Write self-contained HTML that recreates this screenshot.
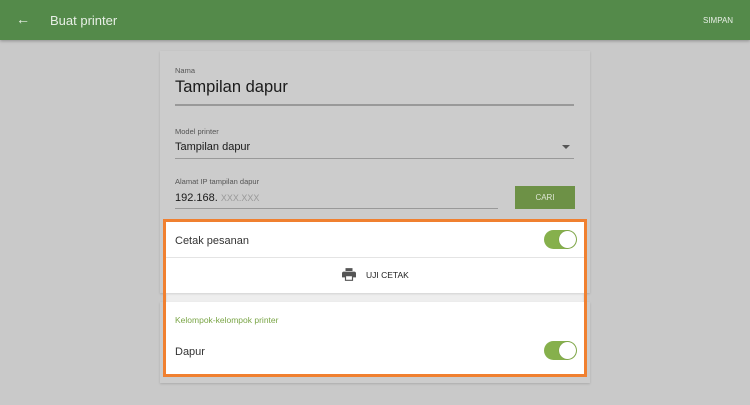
<!DOCTYPE html>
<html><head><style>
*{margin:0;padding:0;box-sizing:border-box}
body{width:750px;height:405px;background:#c9c9c9;font-family:"Liberation Sans",sans-serif;position:relative;overflow:hidden}
.hdr{position:absolute;left:0;top:0;width:750px;height:40px;background:#548a4a;box-shadow:0 1px 3px rgba(0,0,0,.3);color:#e8efe6}
.a{position:absolute}
.card{position:absolute;left:160px;width:430px;background:#cccccc;box-shadow:0 1px 2px rgba(0,0,0,.15)}
.lbl{position:absolute;font-size:7.5px;color:#555}
.line{position:absolute;height:1px;background:#999}
.tog{position:absolute;width:33px;height:19px;border-radius:10px;background:#86b04c}
.tog::after{content:"";position:absolute;right:1px;top:1px;width:17px;height:17px;border-radius:50%;background:#fff;box-shadow:0 0 1px rgba(0,0,0,.3)}
</style></head><body>
<div class="hdr">
<div class="a" style="left:16px;top:11px;font-size:14px">&#8592;</div>
<div class="a" style="left:50px;top:13px;font-size:13px">Buat printer</div>
<div class="a" style="left:703px;top:16px;font-size:8px">SIMPAN</div>
</div>
<div class="card" style="top:51px;height:242px"></div>
<div class="card" style="top:302px;height:81px"></div>
<div class="lbl" style="left:175px;top:66px">Nama</div>
<div class="a" style="left:175px;top:78px;font-size:16.5px;color:#1a1a1a">Tampilan dapur</div>
<div class="line" style="left:175px;top:104px;width:399px;height:1.5px"></div>
<div class="lbl" style="left:175px;top:127px">Model printer</div>
<div class="a" style="left:175px;top:141px;font-size:11px;color:#1a1a1a">Tampilan dapur</div>
<div class="a" style="left:562px;top:145px;width:0;height:0;border-left:4px solid transparent;border-right:4px solid transparent;border-top:4px solid #555"></div>
<div class="line" style="left:175px;top:158px;width:399px"></div>
<div class="lbl" style="left:175px;top:177px">Alamat IP tampilan dapur</div>
<div class="a" style="left:175px;top:192px;font-size:11px;color:#1a1a1a">192.168. <span style="color:#999;font-size:9px">XXX.XXX</span></div>
<div class="line" style="left:175px;top:208px;width:323px"></div>
<div class="a" style="left:515px;top:186px;width:60px;height:23px;background:#6d9146;color:#dde6d4;font-size:8px;text-align:center;line-height:23px">CARI</div>
<div class="a" style="left:163px;top:219px;width:424px;height:158px;border:3px solid #f08030;background:#fff">
<div class="a" style="left:0;top:35px;width:418px;height:1px;background:#e4e4e4"></div>
<div class="a" style="left:9px;top:13px;font-size:11px;color:#333">Cetak pesanan</div>
<div class="tog" style="left:378px;top:8px"></div>
<svg class="a" style="left:176px;top:46px" width="14" height="13" viewBox="0 0 24 22"><path fill="#555" d="M6 0h12v5H6zM3 6h18a3 3 0 0 1 3 3v7h-5v6H5v-6H0V9a3 3 0 0 1 3-3zM7 14v6h10v-6z"/></svg>
<div class="a" style="left:200px;top:48px;font-size:8.5px;color:#222">UJI CETAK</div>
<div class="a" style="left:0;top:71px;width:418px;height:9px;background:#eeeeee;box-shadow:inset 0 1px 2px rgba(0,0,0,.12)"></div>
<div class="a" style="left:9px;top:93px;font-size:8.5px;color:#7aa546">Kelompok-kelompok printer</div>
<div class="a" style="left:9px;top:124px;font-size:11px;color:#333">Dapur</div>
<div class="tog" style="left:378px;top:119px"></div>
</div>
</body></html>
